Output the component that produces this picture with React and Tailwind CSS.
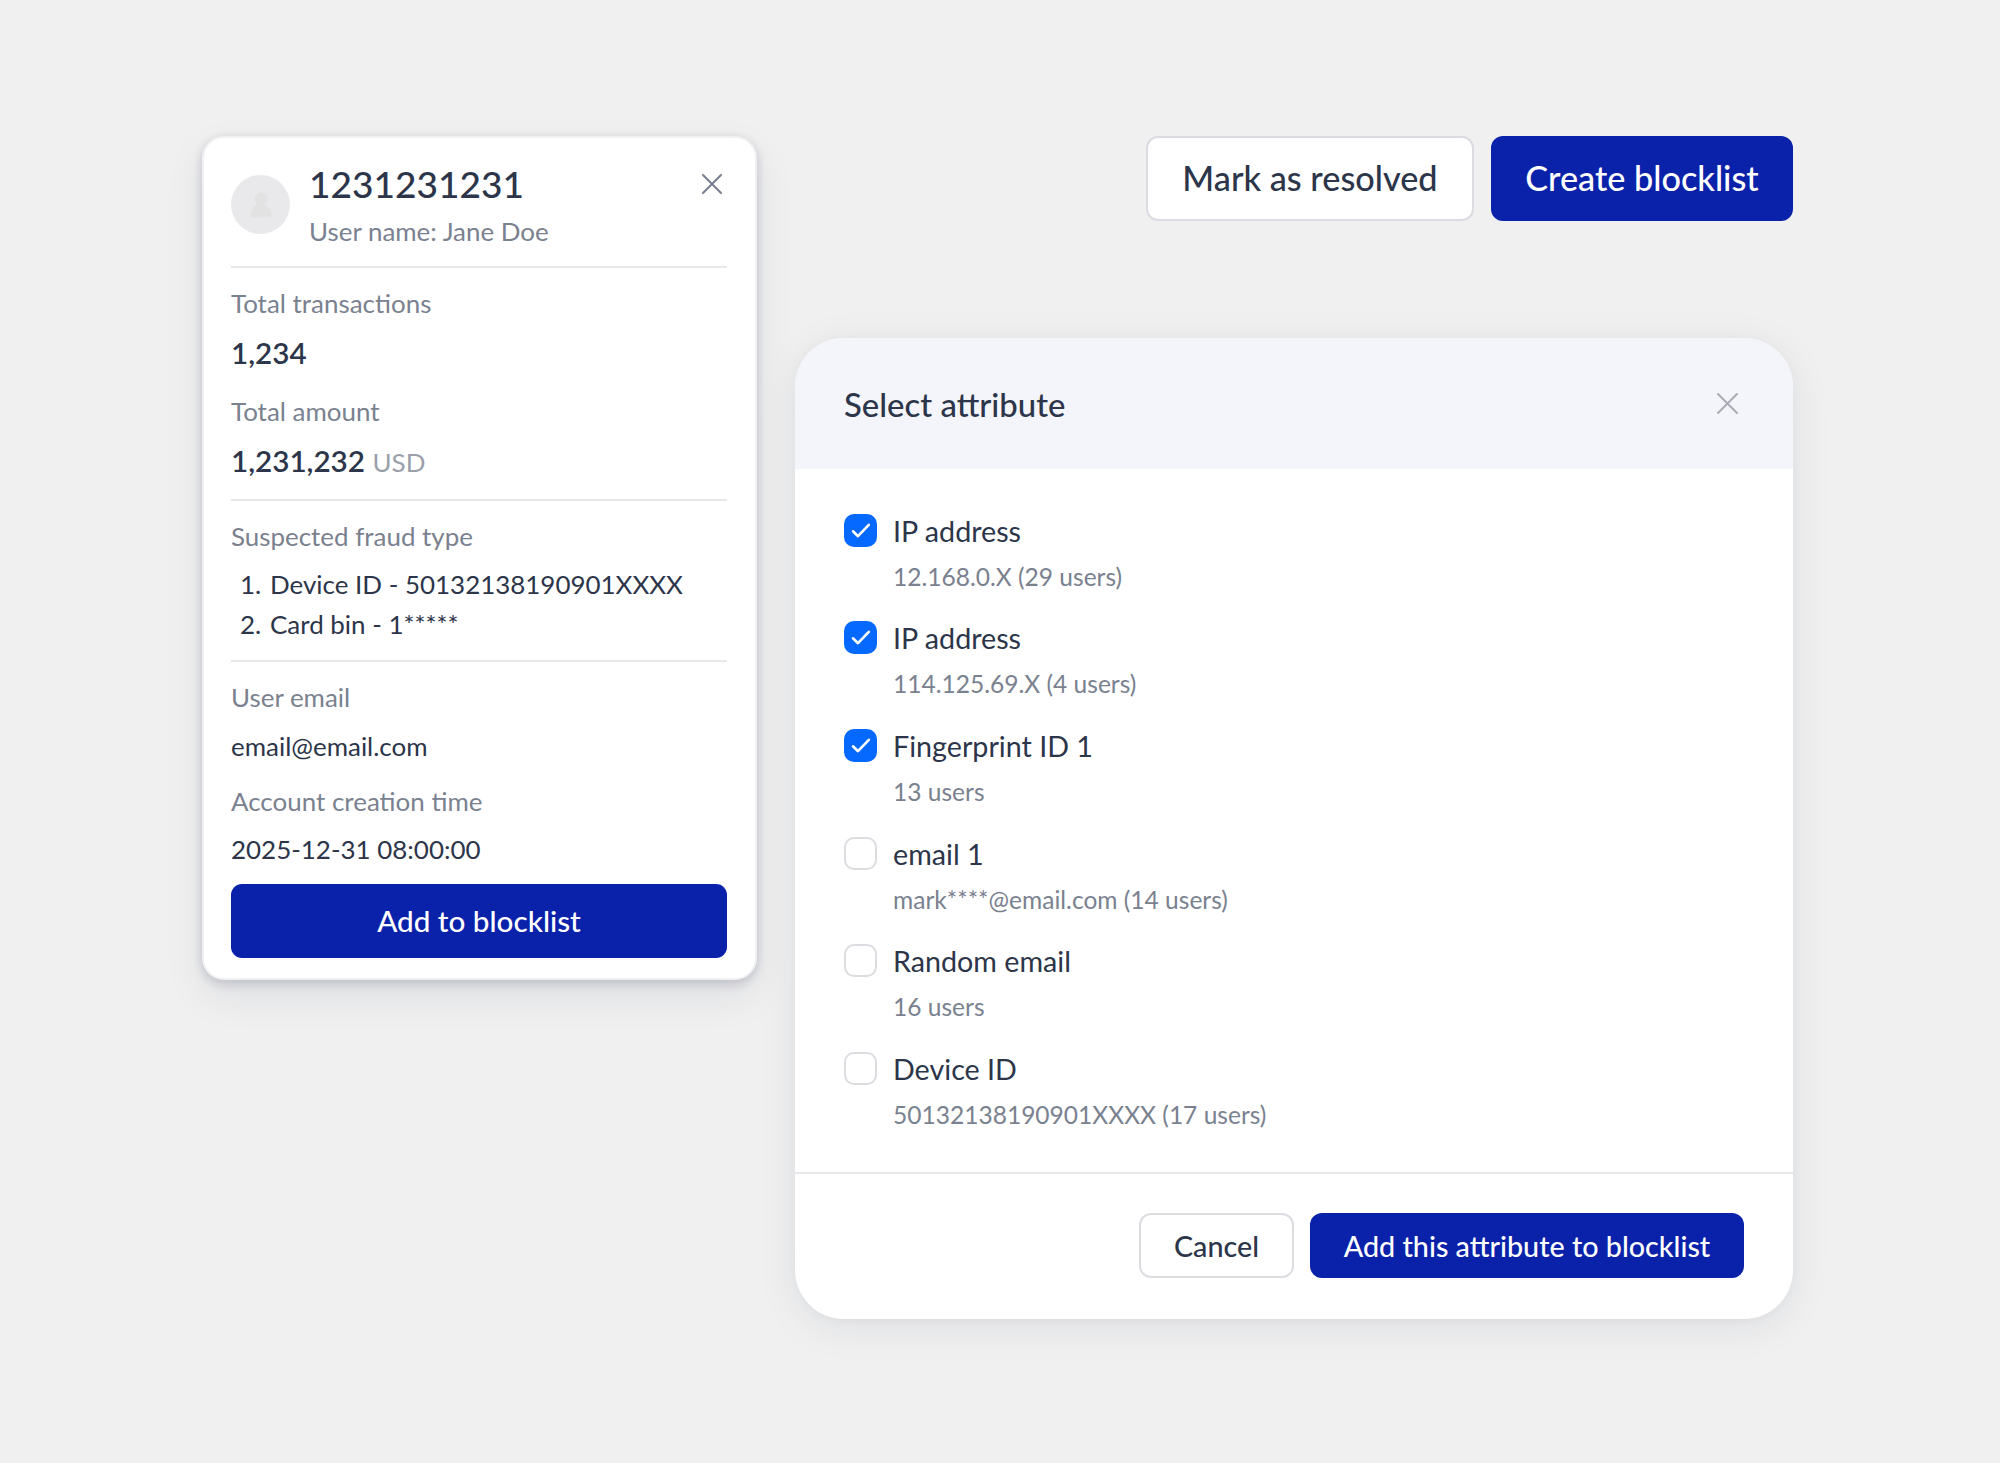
import React, { useState } from 'react';

const ATTRIBUTES = [
  { id: 'ip-1', label: 'IP address', detail: '12.168.0.X (29 users)', checked: true },
  { id: 'ip-2', label: 'IP address', detail: '114.125.69.X (4 users)', checked: true },
  { id: 'fingerprint', label: 'Fingerprint ID 1', detail: '13 users', checked: true },
  { id: 'email-1', label: 'email 1', detail: 'mark****@email.com (14 users)', checked: false },
  { id: 'random-email', label: 'Random email', detail: '16 users', checked: false },
  { id: 'device', label: 'Device ID', detail: '50132138190901XXXX (17 users)', checked: false },
];

const FRAUD_TYPES = ['Device ID - 50132138190901XXXX', 'Card bin - 1*****'];

function CloseIcon({ className }) {
  return (
    <svg viewBox="0 0 20 20" fill="none" stroke="currentColor" strokeLinecap="round" className={className}>
      <path d="M1 1L19 19M19 1L1 19" />
    </svg>
  );
}

function Avatar() {
  return (
    <div className="w-[59px] h-[59px] shrink-0 mt-[15px] rounded-full bg-[#e9e9eb] flex items-center justify-center">
      <svg viewBox="0 0 22 26" className="w-[22px] h-[26px]" fill="#e2e2e2">
        <circle cx="11" cy="7" r="6.5" />
        <path d="M7 11h8v1c2.500 2 6.300 5.500 6.300 10.500v1.500a1.500 1.500 0 0 1-1.500 1.500H2.200a1.500 1.500 0 0 1-1.500-1.500v-1.500C.7 17.500 4.500 14 7 12z" />
      </svg>
    </div>
  );
}

function Divider({ className }) {
  return <div className={`h-[2px] bg-[#e8e8eb] ${className}`} />;
}

function FieldLabel({ children, className = '' }) {
  return <p className={`text-[25.95px] leading-10 text-[#7a818f] ${className}`}>{children}</p>;
}

function UserCard() {
  return (
    <section className="w-[555px] h-[844px] shrink-0 rounded-[22px] border-2 border-[#f1f1f4] bg-white pl-[27px] pr-[28px] pt-[22px] shadow-[0_2px_10px_rgba(30,35,80,0.12),0_6px_12px_rgba(30,35,80,0.08),0_16px_40px_rgba(30,35,80,0.08)]">
      <header className="flex">
        <Avatar />
        <div className="ml-[19px] flex-1">
          <h2 className="text-[37.06px] leading-[48px] font-medium">1231231231</h2>
          <p className="mt-[3px] text-[25.95px] leading-10 text-[#7a818f]">User name: Jane Doe</p>
        </div>
        <button type="button" aria-label="Close" className="self-start mt-[14px] mr-[5px]">
          <CloseIcon className="w-[20px] h-[20px] stroke-[1.900] text-[#757c8a]" />
        </button>
      </header>

      <Divider className="mt-[15px]" />

      <FieldLabel className="mt-[15px]">Total transactions</FieldLabel>
      <p className="mt-[8px] text-[29.65px] leading-[44px] font-semibold">1,234</p>
      <FieldLabel className="mt-[16px]">Total amount</FieldLabel>
      <p className="mt-[8px] text-[29.65px] leading-[44px] font-semibold">
        1,231,232
        <span className="ml-[7.500px] text-[25.95px] font-normal text-[#9a9faa]">USD</span>
      </p>

      <Divider className="mt-[15px]" />

      <FieldLabel className="mt-[15px]">Suspected fraud type</FieldLabel>
      <ol className="mt-[8px] pl-[9px] text-[25.95px] leading-10">
        {FRAUD_TYPES.map((type, i) => (
          <li key={type} className="flex">
            <span className="w-[30px] shrink-0">{i + 1}.</span>
            <span>{type}</span>
          </li>
        ))}
      </ol>

      <Divider className="mt-[16px]" />

      <FieldLabel className="mt-[15px]">User email</FieldLabel>
      <p className="mt-[9px] text-[25.95px] leading-10">email@email.com</p>
      <FieldLabel className="mt-[15px]">Account creation time</FieldLabel>
      <p className="mt-[8px] text-[25.95px] leading-10">2025-12-31 08:00:00</p>

      <button
        type="button"
        className="mt-[15px] w-full h-[74px] rounded-[11px] bg-[#0a21aa] text-[29.65px] font-medium text-white"
      >
        Add to blocklist
      </button>
    </section>
  );
}

function Checkbox({ checked }) {
  if (!checked) {
    return <span className="w-[33px] h-[33px] shrink-0 rounded-[10px] border-2 border-[#dcdde1] bg-white" />;
  }
  return (
    <span className="w-[33px] h-[33px] shrink-0 rounded-[10px] bg-[#0568ff] flex items-center justify-center">
      <svg viewBox="0 0 33 33" className="w-[33px] h-[33px]" fill="none" stroke="white" strokeWidth="2.600" strokeLinecap="round" strokeLinejoin="round">
        <path d="M9 17.300L14 22.200L24.800 10.800" />
      </svg>
    </span>
  );
}

function AttributeModal() {
  const [items, setItems] = useState(ATTRIBUTES);

  const toggle = (id) => {
    setItems((prev) => prev.map((item) => (item.id === id ? { ...item, checked: !item.checked } : item)));
  };

  return (
    <section className="h-[981px] rounded-[49px] overflow-hidden bg-white shadow-[0_2px_12px_rgba(30,35,80,0.03),0_8px_40px_rgba(30,35,80,0.08)]">
      <header className="h-[131px] bg-[#f4f5fa] pl-[49px] pr-[55px] flex items-center justify-between">
        <h2 className="mt-[2px] text-[32.900px] leading-[44px] font-medium">Select attribute</h2>
        <button type="button" aria-label="Close">
          <CloseIcon className="w-[21px] h-[21px] stroke-[1.900] text-[#a9abb5]" />
        </button>
      </header>

      <ul className="h-[703px] pt-[44.600px] px-[49px]">
        {items.map((item) => (
          <li key={item.id} className="h-[107.700px] flex">
            <button type="button" className="flex self-start text-left" onClick={() => toggle(item.id)}>
              <Checkbox checked={item.checked} />
              <span className="ml-[16px] block">
                <span className="mt-px block text-[28.7px] leading-[33px]">{item.label}</span>
                <span className="mt-[9px] block text-[24.55px] leading-10 text-[#7a818f]">{item.detail}</span>
              </span>
            </button>
          </li>
        ))}
      </ul>

      <footer className="border-t-2 border-[#e8e8eb] pt-[39px] pr-[49px] flex justify-end gap-[16px]">
        <button type="button" className="w-[155px] h-[65px] pt-[2px] rounded-[12px] border-2 border-[#dcdde1] text-[28.7px] font-medium">
          Cancel
        </button>
        <button type="button" className="w-[434px] h-[65px] pt-[2px] rounded-[12px] bg-[#0a21aa] text-[28.7px] font-medium text-white">
          Add this attribute to blocklist
        </button>
      </footer>
    </section>
  );
}

export default function App() {
  return (
    <main className="w-[2000px] h-[1463px] overflow-hidden bg-[#f0f0f0] pl-[202px] pt-[136px] flex items-start font-['Lato',sans-serif] text-[#2c3549]">
      <UserCard />
      <div className="ml-[38px] w-[998px]">
        <div className="flex justify-end gap-[17px]">
          <button type="button" className="w-[328px] h-[85px] pb-[2px] rounded-[12px] border-2 border-[#dadce1] bg-white text-[34.25px] font-medium">
            Mark as resolved
          </button>
          <button type="button" className="w-[302px] h-[85px] pb-[2px] rounded-[12px] bg-[#0a21aa] text-[34.25px] font-medium text-white">
            Create blocklist
          </button>
        </div>
        <div className="mt-[117px]">
          <AttributeModal />
        </div>
      </div>
    </main>
  );
}
